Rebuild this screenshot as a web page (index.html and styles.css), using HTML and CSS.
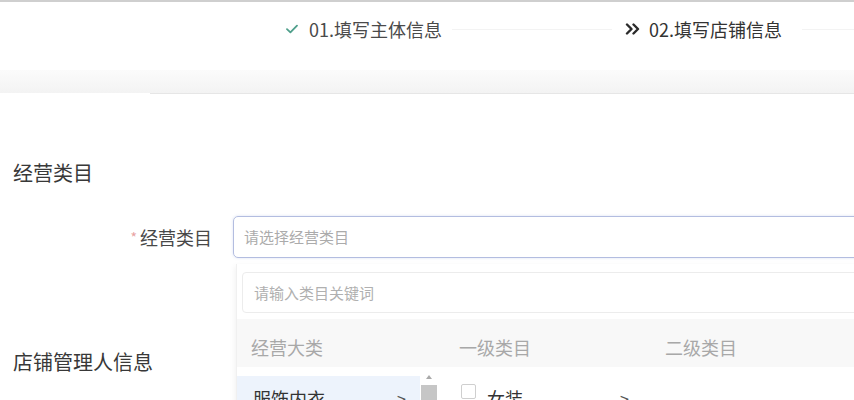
FILE: index.html
```html
<!DOCTYPE html>
<html lang="zh-CN">
<head>
<meta charset="utf-8">
<title>填写店铺信息</title>
<link rel="stylesheet" href="styles.css">
</head>
<body>
<div class="topline"></div>
<div class="steps">
  <div class="step done">
    <svg class="check" width="12" height="10" viewBox="0 0 12 10"><path d="M1 5.2 L4.4 8.4 L11 1.6" fill="none" stroke="#4f9f8b" stroke-width="1.8" stroke-linecap="round" stroke-linejoin="round"/></svg>
    <span>01.填写主体信息</span>
  </div>
  <div class="connector short"></div>
  <div class="step current">
    <svg class="dbl" width="16" height="12" viewBox="0 0 16 12"><path d="M2 1.5 L6.5 6 L2 10.5 M8.5 1.5 L13 6 L8.5 10.5" fill="none" stroke="#2b2b2b" stroke-width="2.4" stroke-linecap="round" stroke-linejoin="round"/></svg>
    <span>02.填写店铺信息</span>
  </div>
  <div class="connector long"></div>
</div>
<div class="band"></div>
<div class="divider"></div>

<main class="content">
  <h2 class="sec-title first">经营类目</h2>
  <div class="form-row">
    <label class="label"><span class="req">*</span>经营类目</label>
    <div class="select-wrap">
      <div class="select">请选择经营类目</div>
      <div class="dropdown">
        <div class="search">请输入类目关键词</div>
        <div class="cols head">
          <div class="col c1">经营大类</div>
          <div class="col c2">一级类目</div>
          <div class="col c3">二级类目</div>
        </div>
        <div class="cols body">
          <div class="col c1 list">
            <div class="item active"><span>服饰内衣</span><span class="arr">&gt;</span></div>
            <div class="scrollbar"><div class="up"></div><div class="thumb"></div></div>
          </div>
          <div class="col c2 list">
            <div class="item sub"><span class="box"></span><span class="name">女装</span><span class="arr">&gt;</span></div>
          </div>
          <div class="col c3 list"></div>
        </div>
      </div>
    </div>
  </div>
  <h2 class="sec-title second">店铺管理人信息</h2>
</main>
</body>
</html>
```

FILE: styles.css
```css
* { box-sizing: border-box; }
html, body {
  margin: 0;
  padding: 0;
  background: #fff;
  width: 854px;
  height: 400px;
  overflow: hidden;
  font-family: "Noto Sans CJK SC", "Noto Sans", sans-serif;
  color: #333;
}
.topline { height: 2px; background: #cfcfcf; }
.steps {
  height: 54px;
  display: flex;
  align-items: center;
  padding-left: 286px;
  font-size: 18px;
  color: #4a4a4a;
}
.step { display: flex; align-items: center; white-space: nowrap; }
.step .check { margin-right: 11px; }
.step .dbl { margin-right: 8px; }
.step.current { color: #333; }
.connector { height: 1px; background: #f3f3f3; }
.connector.short { width: 160px; margin: 0 13px 0 10px; }
.connector.long { flex: 1; margin-left: 20px; }
.band {
  margin-top: 14px;
  height: 23px;
  background: linear-gradient(#fbfbfb, #f3f3f3);
}
.divider { margin-left: 150px; height: 1px; background: #e6e6e6; }

.content { padding: 0 0 0 13px; }
.sec-title {
  margin: 0;
  font-size: 20px;
  font-weight: 400;
  line-height: 26px;
  color: #383838;
}
.sec-title.first { margin-top: 66px; }
.sec-title.second { margin-top: 91px; }

.form-row {
  display: flex;
  align-items: flex-start;
  margin-top: 30px;
  height: 42px;
}
.label {
  width: 199px;
  text-align: right;
  font-size: 18px;
  line-height: 42px;
  color: #484848;
  flex: none;
}
.req { color: #e8a2a2; font-size: 14px; margin-right: 3px; vertical-align: 2px; }
.select-wrap { position: relative; margin-left: 21px; flex: none; width: 700px; }
.select {
  height: 42px;
  border: 1.5px solid #b3bde0;
  border-radius: 5px;
  box-shadow: 0 0 3px rgba(150,170,220,0.35);
  padding-left: 10px;
  font-size: 15px;
  line-height: 39px;
  color: #ababab;
}
.dropdown {
  position: absolute;
  top: 48px;
  left: 3px;
  width: 700px;
  height: 200px;
  background: #fff;
  box-shadow: -1px 2px 6px rgba(0,0,0,0.06);
  border-left: 1px solid #f0f0f0;
  padding-top: 8px;
}
.search {
  margin-left: 5px;
  height: 41px;
  border: 1px solid #ececec;
  border-radius: 4px;
  padding-left: 11px;
  font-size: 15px;
  line-height: 39px;
  color: #b0b0b0;
}
.cols { display: grid; grid-template-columns: 201px 208px 1fr; }
.cols.head {
  margin-top: 6px;
  height: 48px;
  background: #f8f8f8;
  padding-top: 8px;
  font-size: 18px;
  line-height: 40px;
  color: #a8a8a8;
}
.head .c1 { padding-left: 14px; }
.head .c2 { padding-left: 21px; }
.head .c3 { padding-left: 19px; }
.list { position: relative; padding-top: 9px; }
.c1.list { padding-right: 18px; }
.item {
  height: 44px;
  display: flex;
  align-items: center;
  font-size: 18px;
  color: #333;
}
.item.active { background: #edf3fc; padding: 0 14px 0 16px; justify-content: space-between; }
.item .arr { color: #555; font-size: 16px; }
.scrollbar { position: absolute; right: 0; top: 0; width: 18px; height: 100%; }
.scrollbar .up {
  margin: 8px auto 0;
  width: 0; height: 0;
  border-left: 3px solid transparent;
  border-right: 3px solid transparent;
  border-bottom: 4px solid #a9a9a9;
}
.scrollbar .thumb { margin: 6px 1px 0 1px; height: 60px; background: #c6c6c6; }
.item.sub { padding-left: 23px; }
.box { width: 15px; height: 15px; border: 1px solid #cfcfcf; border-radius: 2px; margin-right: 11px; align-self: flex-start; margin-top: 8px; }
.item.sub .name { width: 133px; }
```
